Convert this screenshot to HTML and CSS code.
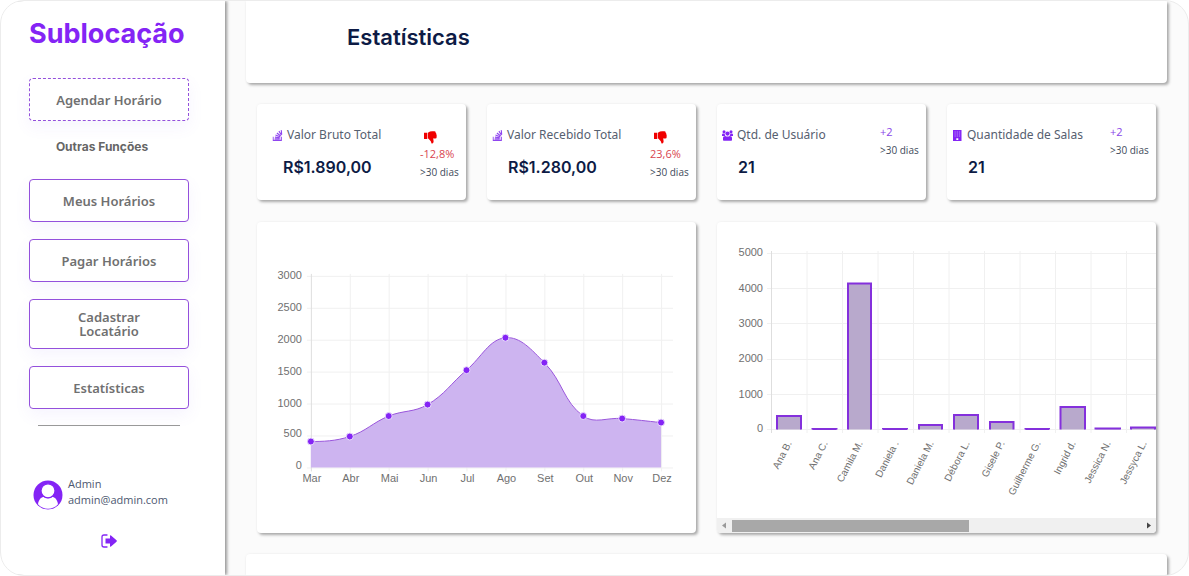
FILE: index.html
```html
<!DOCTYPE html>
<html lang="pt-BR">
<head>
<meta charset="utf-8">
<meta name="viewport" content="width=device-width, initial-scale=1">
<title>Sublocação - Estatísticas</title>
<link rel="stylesheet" href="styles.css">
</head>
<body>
<div class="app">
  <aside class="sidebar">
    <h1 class="brand">Sublocação</h1>
    <nav class="menu">
      <button type="button" class="menu-button menu-button-dashed">Agendar Horário</button>
      <h2 class="menu-title">Outras Funções</h2>
      <button type="button" class="menu-button">Meus Horários</button>
      <button type="button" class="menu-button">Pagar Horários</button>
      <button type="button" class="menu-button menu-button-tall">Cadastrar Locatário</button>
      <button type="button" class="menu-button">Estatísticas</button>
    </nav>
    <hr class="divider">
    <div class="user">
      <svg class="avatar" viewBox="0 0 30 30" aria-hidden="true">
        <circle cx="15" cy="15" r="14.5" fill="#8424f5"/>
        <path d="M5 24.2c.6-4.600 3.200-7.200 6-7.200 2.400 1.700 5.600 1.700 8 0 2.800 0 5.400 2.600 6 7.200a13.200 13.200 0 0 1-20 0z" fill="#fff"/>
        <circle cx="15" cy="10.800" r="7" fill="#fff" stroke="#8424f5" stroke-width="1.200"/>
      </svg>
      <div class="user-text"><span>Admin</span><span>admin@admin.com</span></div>
    </div>
    <button type="button" class="logout" aria-label="Sair">
      <svg viewBox="0 0 16 14" width="16" height="14" aria-hidden="true">
        <path d="M6 1H3Q1 1 1 3v8q0 2 2 2h3" fill="none" stroke="#8424f5" stroke-width="1.300" stroke-linecap="round"/>
        <path d="M4.500 4.500h4.500V2q0-1.300 1-.400l5.500 4.700q.7.700 0 1.400L10 12.400q-1 .900-1-.400V9.500H4.500z" fill="#8424f5"/>
      </svg>
    </button>
  </aside>

  <main class="main">
    <header class="page-header"><h2>Estatísticas</h2></header>

    <div class="content">
      <section class="card stat stat-inset">
        <div class="stat-main">
          <h3><svg class="icon" viewBox="0 0 10 11" aria-hidden="true"><use href="#stack"/></svg>Valor Bruto Total</h3>
          <strong>R$1.890,00</strong>
        </div>
        <div class="stat-side down">
          <svg class="thumb" viewBox="0 0 12 12" aria-hidden="true"><use href="#thumb"/></svg>
          <span class="change">-12,8%</span><span class="period">&gt;30 dias</span>
        </div>
      </section>
      <section class="card stat">
        <div class="stat-main">
          <h3><svg class="icon" viewBox="0 0 10 11" aria-hidden="true"><use href="#stack"/></svg>Valor Recebido Total</h3>
          <strong>R$1.280,00</strong>
        </div>
        <div class="stat-side down">
          <svg class="thumb" viewBox="0 0 12 12" aria-hidden="true"><use href="#thumb"/></svg>
          <span class="change">23,6%</span><span class="period">&gt;30 dias</span>
        </div>
      </section>
      <section class="card stat">
        <div class="stat-main">
          <h3><svg class="icon" viewBox="0 0 11 11" aria-hidden="true">
            <g fill="#8424f5"><circle cx="2" cy="1.800" r="1.500"/><circle cx="9" cy="1.800" r="1.500"/><circle cx="5.500" cy="3.600" r="2.100"/>
            <path d="M0 6V4.800Q0 3.500 1.200 3.500h1.500Q2.800 5.300 3.500 6zM11 6V4.800Q11 3.500 9.800 3.500H8.300Q8.200 5.300 7.500 6zM1 10V7.800Q1 6 3.200 6 5.500 7 7.800 6 10 6 10 7.800V10q0 .800-.8.800H1.800Q1 10.800 1 10z"/></g>
          </svg>Qtd. de Usuário</h3>
          <strong>21</strong>
        </div>
        <div class="stat-side up"><span class="change">+2</span><span class="period">&gt;30 dias</span></div>
      </section>
      <section class="card stat">
        <div class="stat-main">
          <h3><svg class="icon" viewBox="0 0 10 11" aria-hidden="true">
            <path d="M.5 0h8.500v11H.5z" fill="#8424f5"/>
            <path d="M2 2h5.600M2 4h5.600M2 6h5.600" stroke="#cfaefb" stroke-width=".8" stroke-dasharray="1.200 1"/>
            <path d="M3.800 8.300h2V10h-2z" fill="#fff"/>
          </svg>Quantidade de Salas</h3>
          <strong>21</strong>
        </div>
        <div class="stat-side up"><span class="change">+2</span><span class="period">&gt;30 dias</span></div>
      </section>

      <section class="card chart">
        <svg class="area-chart" viewBox="0 0 440 310" role="img" aria-label="Valores por mês">
          <path class="grid" d="M50 54.500H417M50 86.500H417M50 118.500H417M50 150.500H417M50 182.500H417M50 214.500H417M50 246.500H417M93.500 52V250M132.500 52V250M171.500 52V250M210.500 52V250M249.500 52V250M288.500 52V250M327.500 52V250M366.500 52V250M405.500 52V250"/>
          <path class="axis" d="M54.500 52V250"/>
          <path class="area" d="M54 220C66 220 78.300 219.800 93 215C109.500 209.600 115.800 201.200 132 194.500C147 188.400 157.300 191.100 171 183C188.500 172.700 194.200 162 210 148.500C225.400 135.200 232.700 117.600 249 116C263.900 114.600 275.200 128.100 288 141C306.400 159.500 307.300 180.400 327 194.500C338.500 202.800 350.400 195.700 366 197C381.600 198.300 389 199.400 405 201V246H54z"/>
          <path class="line" d="M54 220C66 220 78.300 219.800 93 215C109.500 209.600 115.800 201.200 132 194.500C147 188.400 157.300 191.100 171 183C188.500 172.700 194.200 162 210 148.500C225.400 135.200 232.700 117.600 249 116C263.900 114.600 275.200 128.100 288 141C306.400 159.500 307.300 180.400 327 194.500C338.500 202.800 350.400 195.700 366 197C381.600 198.300 389 199.400 405 201"/>
          <g class="dots"><circle cx="54" cy="220" r="3.500"/><circle cx="93" cy="215" r="3.500"/><circle cx="132" cy="194.500" r="3.500"/><circle cx="171" cy="183" r="3.500"/><circle cx="210" cy="148.500" r="3.500"/><circle cx="249" cy="116" r="3.500"/><circle cx="288" cy="141" r="3.500"/><circle cx="327" cy="194.500" r="3.500"/><circle cx="366" cy="197" r="3.500"/><circle cx="405" cy="201" r="3.500"/></g>
          <g class="labels-y"><text x="45" y="57">3000</text><text x="45" y="89">2500</text><text x="45" y="121">2000</text><text x="45" y="153">1500</text><text x="45" y="185">1000</text><text x="45" y="216">500</text><text x="45" y="248">0</text></g>
          <g class="labels-x"><text x="55" y="261">Mar</text><text x="94" y="261">Abr</text><text x="133" y="261">Mai</text><text x="172" y="261">Jun</text><text x="211" y="261">Jul</text><text x="250" y="261">Ago</text><text x="289" y="261">Set</text><text x="328" y="261">Out</text><text x="367" y="261">Nov</text><text x="406" y="261">Dez</text></g>
        </svg>
      </section>

      <section class="card chart bars">
        <div class="bar-view">
          <svg width="780" height="295" viewBox="0 0 780 295" role="img" aria-label="Valores por locatário">
            <path class="grid" d="M50 31.500H780M50 66.500H780M50 101.500H780M50 137.500H780M50 172.500H780M50 207.500H780M90 29V211M125.500 29V211M161 29V211M196.500 29V211M232 29V211M267.500 29V211M303 29V211M338.500 29V211M374 29V211M409.500 29V211"/>
            <path class="axis" d="M54.500 29V211"/>
            <g class="bar"><path d="M60 207.500V194H84V207.500"/><path d="M95.500 207.500V207H119.500V207.500"/><path d="M131 207.500V61.500H154V207.500"/><path d="M166 207.500V207H190V207.500"/><path d="M202 207.500V203H225V207.500"/><path d="M237 207.500V193H261V207.500"/><path d="M273 207.500V200H296.500V207.500"/><path d="M308.500 207.500V207H332V207.500"/><path d="M343.500 207.500V185H368V207.500"/><path d="M378.500 207.500V206.500H403V207.500"/><path d="M414 207.500V205.500H438V207.500"/></g>
            <g class="labels-y"><text x="46" y="34">5000</text><text x="46" y="70">4000</text><text x="46" y="105">3000</text><text x="46" y="140">2000</text><text x="46" y="176">1000</text><text x="46" y="210">0</text></g>
            <g class="labels-r">
              <text transform="translate(75 221) rotate(-63)">Ana B.</text>
              <text transform="translate(111 221) rotate(-63)">Ana C.</text>
              <text transform="translate(146 221) rotate(-63)">Camila M.</text>
              <text transform="translate(182 221) rotate(-63)">Daniela .</text>
              <text transform="translate(217 221) rotate(-63)">Daniela M.</text>
              <text transform="translate(253 221) rotate(-63)">Débora L.</text>
              <text transform="translate(288 221) rotate(-63)">Gisele P.</text>
              <text transform="translate(324 221) rotate(-63)">Guilherme G.</text>
              <text transform="translate(359 221) rotate(-63)">Ingrid d.</text>
              <text transform="translate(394 221) rotate(-63)">Jessica N.</text>
              <text transform="translate(430 221) rotate(-63)">Jessyca L.</text>
              <text transform="translate(465 221) rotate(-63)">Joana M.</text>
            </g>
          </svg>
        </div>
        <div class="scrollbar">
          <svg viewBox="0 0 15 15" aria-hidden="true"><path d="M9 4.500v6l-4-3z" fill="#999"/></svg>
          <div class="track"><div class="track-thumb"></div></div>
          <svg viewBox="0 0 15 15" aria-hidden="true"><path d="M6 4.500v6l4-3z" fill="#444"/></svg>
        </div>
      </section>
    </div>

    <section class="card next-section"></section>
  </main>
</div>

<svg class="symbols" aria-hidden="true">
  <symbol id="stack" viewBox="0 0 10 11">
    <path d="M.6 6.800v3.600h8.200V6.800M2.200 8.900h5M2.400 7.100l4.900.6M3 5l4.500 1.700M4.400 3l3.800 3M6.400 1.100l2.600 4M8.700.2l.7 4.400" fill="none" stroke="#8f45ef" stroke-width="1.100"/>
  </symbol>
  <symbol id="thumb" viewBox="0 0 12 12">
    <path d="M0 1.500h3v5.800H0zM3.600 1.500Q5.500.300 7.500.300h2q1.300 0 1.300 1.200.7.500.5 1.400.7.700.3 1.600.5 2.300-1.200 2.400H8.300q.7 1.600.5 3.200Q8.500 11.700 7 11.500q-.6-2.500-1.800-3.300Q4.400 7.300 3.600 6.800z" fill="#f00000"/>
  </symbol>
</svg>
</body>
</html>
```
FILE: styles.css
```css
* { box-sizing: border-box; }

body {
  margin: 0;
  background: #fff;
  color: #566070;
  font-family: "Noto Sans", "Open Sans", sans-serif;
}

h1, h2, h3 { margin: 0; }

button { font: inherit; cursor: pointer; }

.app {
  display: flex;
  height: 100vh;
  overflow: hidden;
  border: 1px solid #ececec;
  border-radius: 24px;
  background: #fbfbfb;
}

.sidebar {
  flex: 0 0 224px;
  display: flex;
  flex-direction: column;
  padding: 16px 36px 0 28px;
  background: #fff;
  box-shadow: 2px 0 3px rgba(0, 0, 0, .4);
}

.brand {
  color: #8424f5;
  font: 700 27px/34px Inter, sans-serif;
}

.menu {
  display: flex;
  flex-direction: column;
  gap: 17px;
  margin-top: 27px;
}

.menu-button {
  min-height: 43px;
  padding: 0 28px;
  border: 1px solid #9450dc;
  border-radius: 4px;
  background: #fff;
  box-shadow: 0 6px 16px rgba(132, 100, 245, .07);
  color: #707070;
  font-size: 13px;
  font-weight: 600;
  line-height: 14px;
}

.menu-button-dashed {
  border-style: dashed;
  padding: 0 12px;
}

.menu-button-tall { min-height: 50px; }

.menu-title {
  padding: 0 14px 7px 0;
  color: #666;
  font: 700 12px/17px Inter, sans-serif;
  text-align: center;
}

.divider {
  width: 142px;
  margin: 16px 0 0 9px;
  border: 0;
  border-top: 1px solid #999;
}

.user {
  display: flex;
  align-items: center;
  gap: 5px;
  margin: 48px 0 0 4px;
}

.avatar {
  width: 30px;
  height: 30px;
  margin-top: 6px;
}

.user-text {
  display: flex;
  flex-direction: column;
  color: #4d5870;
  font: 11px/16px "Open Sans", "Noto Sans", sans-serif;
}

.logout {
  align-self: center;
  display: flex;
  margin-top: 21px;
  padding: 3px;
  border: 0;
  background: none;
}

.main {
  flex: 1;
  min-width: 0;
  display: flex;
  flex-direction: column;
  gap: 21px;
  padding: 0 21px;
}

.card, .page-header {
  border-radius: 4px;
  background: #fff;
  box-shadow: 2px 2px 3px rgba(0, 0, 0, .32), 0 0 3px rgba(0, 0, 0, .05);
}

.page-header {
  padding: 20px 101px 30px;
  border-radius: 0 0 4px 4px;
}

.page-header h2 {
  color: #0d1b45;
  font: 600 22px/32px Inter, sans-serif;
}

.content {
  display: grid;
  grid-template-columns: repeat(4, minmax(0, 1fr));
  gap: 22px 21px;
  padding: 0 11px;
}

.stat {
  display: grid;
  grid-template-columns: 158px 1fr;
  min-height: 96px;
  padding: 21px 0 0 5px;
}

.stat-inset {
  grid-template-columns: 148px 1fr;
  padding-left: 15px;
}

.stat-main h3 {
  display: flex;
  align-items: center;
  gap: 4px;
  font-size: 12px;
  font-weight: 400;
  line-height: 20px;
  white-space: nowrap;
}

.icon {
  width: 11px;
  height: 11px;
}

.stat-main strong {
  display: block;
  padding: 9px 0 0 16px;
  color: #0d1b45;
  font: 600 16px/26px Inter, sans-serif;
}

.stat-inset strong { padding-left: 11px; }

.stat-side {
  display: flex;
  flex-direction: column;
  font: 11px/18px "Open Sans", "Noto Sans", sans-serif;
  white-space: nowrap;
}

.stat-side.up { margin-top: -2px; }

.thumb {
  width: 13px;
  height: 13px;
  margin: 6px 0 1px 4px;
}

.down .change { color: #d94550; }
.up .change { color: #8a45e8; }

.period {
  color: #414b5c;
  font-size: 10px;
}

.chart {
  grid-column: span 2;
  min-height: 311px;
}

.area-chart {
  display: block;
  width: 100%;
}

.bars {
  display: flex;
  flex-direction: column;
  overflow: hidden;
}

.bar-view {
  flex: 1;
  overflow: hidden;
}

.bar-view svg { display: block; }

.scrollbar {
  display: flex;
  height: 15px;
  background: #f0f0f0;
}

.scrollbar svg {
  width: 15px;
  height: 15px;
}

.track {
  flex: 1;
  padding: 2px 0 1px;
}

.track-thumb {
  width: 58%;
  height: 100%;
  background: #a8a8a8;
}

.grid, .axis {
  fill: none;
  stroke: #f0f0f0;
}

.axis { stroke: #dedede; }

.area { fill: #cdb4f0; }

.line {
  fill: none;
  stroke: #9a55dc;
}

.dots {
  fill: #8424f5;
  stroke: #e9dcfb;
}

.bar {
  fill: #b8a9cc;
  stroke: #8430dc;
  stroke-width: 2;
}

.labels-y, .labels-x, .labels-r {
  fill: #707070;
  font: 11px "Liberation Sans", Arial, sans-serif;
}

.labels-r { font-size: 10px; }

.labels-y, .labels-r { text-anchor: end; }
.labels-x { text-anchor: middle; }

.next-section {
  flex: 1;
  border-radius: 4px 4px 0 0;
}

.symbols {
  position: absolute;
  width: 0;
  height: 0;
}
```
